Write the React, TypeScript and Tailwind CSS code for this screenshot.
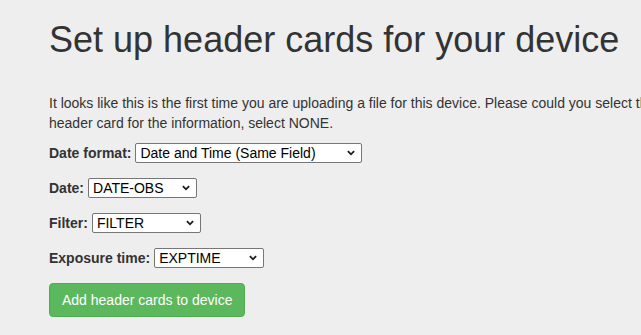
import React from "react";

function Chevron() {
  return (
    <svg width="8" height="6" viewBox="0 0 8 6" className="absolute right-[7px] top-1/2 -translate-y-1/2 pointer-events-none">
      <path d="M0.9 1.2 L4 4.3 L7.1 1.2" fill="none" stroke="#1a1a1a" strokeWidth="1.8" />
    </svg>
  );
}

function Sel({ value, width }: { value: string; width: number }) {
  return (
    <span className="relative inline-block align-middle" style={{ width }}>
      <select
        defaultValue={value}
        className="appearance-none w-full h-[20px] bg-white border border-[#767676] rounded-[2px] pl-[4px] pr-5 text-[14px] leading-[18px] text-black"
        style={{ fontFamily: '"Liberation Sans", Arial, sans-serif' }}
      >
        <option>{value}</option>
      </select>
      <Chevron />
    </span>
  );
}

function Row({ label, value, width }: { label: string; value: string; width: number }) {
  return (
    <div className="mb-[15px] flex items-center h-[20px]">
      <label className="font-bold text-[14px] leading-[20px] mr-[4px]">{label}</label>
      <Sel value={value} width={width} />
    </div>
  );
}

export default function App() {
  return (
    <div
      className="w-[641px] h-[335px] overflow-hidden bg-[#eeeeee] text-[#333333]"
      style={{ fontFamily: '"Liberation Sans", Arial, Helvetica, sans-serif' }}
    >
      <div className="pl-[49px] w-[900px]">
        <h1 className="pt-[20px] text-[36px] leading-[39.6px] font-normal m-0">Set up header cards for your device</h1>
        <p className="mt-[33px] mb-[10px] text-[14px] leading-[20px]">
          <span className="block whitespace-nowrap">
            It looks like this is the first time you are uploading a file for this device. Please could you select the correct header cards. If there is no
          </span>
          <span className="block whitespace-nowrap">header card for the information, select NONE.</span>
        </p>
        <Row label="Date format:" value="Date and Time (Same Field)" width={227} />
        <Row label="Date:" value="DATE-OBS" width={109} />
        <Row label="Filter:" value="FILTER" width={109} />
        <Row label="Exposure time:" value="EXPTIME" width={110} />
        <button className="bg-[#5cb85c] border border-[#4cae4c] text-white text-[14px] leading-[20px] px-[12px] py-[6px] rounded-[4px]">
          Add header cards to device
        </button>
      </div>
    </div>
  );
}
